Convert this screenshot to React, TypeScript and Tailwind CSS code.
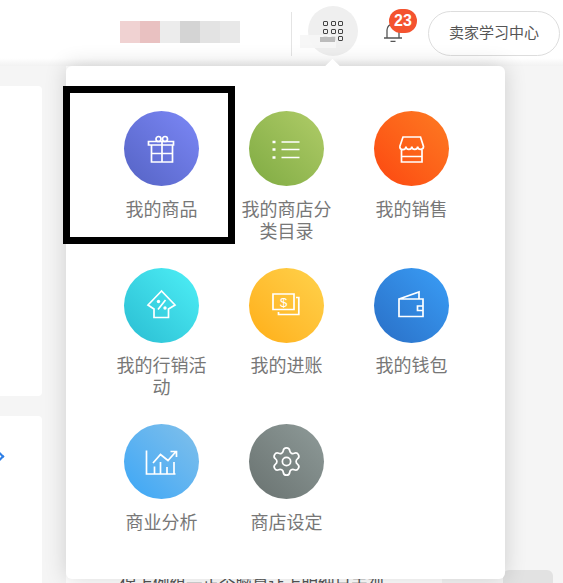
import { Settings } from "lucide-react";
import type { ReactNode } from "react";

function Line({ d }: { d: string }) {
  return <path d={d} fill="none" stroke="white" strokeWidth="1.7" />;
}

const GiftIcon = (
  <svg width="34" height="34" viewBox="0 0 34 34">
    <Line d="M3.5 9.5h25v3.5h-25zM6.5 13v17h21V13M17 9.5V30M6.5 21.5h21" />
    <circle cx="13.5" cy="7" r="2.5" fill="none" stroke="white" strokeWidth="1.7" />
    <circle cx="20" cy="7" r="2.5" fill="none" stroke="white" strokeWidth="1.7" />
  </svg>
);

const ListIcon = (
  <svg width="34" height="34" viewBox="0 0 34 34">
    <Line d="M11.5 10h18M11.5 17.5h18M11.5 25.5h18" />
    <path d="M2.5 8.8h3v2.4h-3zM2.5 16.3h3v2.4h-3zM2.5 24.3h3v2.4h-3z" fill="white" />
  </svg>
);

const StoreIcon = (
  <svg width="34" height="34" viewBox="0 0 34 34">
    <Line d="M4.800 14.500 8 5h17.500l3 9.500a2.900 2.900 0 0 1-5.850 0a2.900 2.900 0 0 1-5.850 0a2.900 2.900 0 0 1-5.850 0a2.900 2.900 0 0 1-6.150 0M6.500 18v12h20.500V18M6.500 24.500h20.500" />
  </svg>
);

const HouseIcon = (
  <svg width="34" height="34" viewBox="0 0 34 34">
    <Line d="M16.500 3 3 17l6 4v8.500h14.500V21l6.500-4zM20.500 12l-7.500 9.500" />
    <circle cx="13.500" cy="13.500" r="1.700" fill="white" />
    <circle cx="20" cy="20" r="1.700" fill="white" />
  </svg>
);

const MoneyIcon = (
  <svg width="34" height="34" viewBox="0 0 34 34">
    <Line d="M3 6h21v15.500H3zM26 9.500h2.800v17H8.500V24" />
    <text x="13.500" y="18.500" textAnchor="middle" fontSize="13" fill="white" fontFamily="Liberation Sans, sans-serif">
      $
    </text>
  </svg>
);

const WalletIcon = (
  <svg width="34" height="34" viewBox="0 0 34 34">
    <Line d="M4 11v17.500h24V11zM4 11l20-7v7M22.500 18H28v4.500h-5.500z" />
  </svg>
);

const ChartIcon = (
  <svg width="34" height="34" viewBox="0 0 34 34">
    <Line d="M1.500 5.500V29h29M9.500 29v-7.500M15.500 29V17M22 29v-7M29 29V17M8 18l7.500-8.500 7.500 6 8-9M25.500 6.500H31.500V12" />
  </svg>
);

const GearIcon = <Settings size={33} color="white" strokeWidth={1.25} />;

const entries: { label: string; circle: string; icon: ReactNode }[] = [
  { label: "我的商品", circle: "from-[#5563c4] to-[#7c88f7]", icon: GiftIcon },
  { label: "我的商店分类目录", circle: "from-[#7fab42] to-[#b0cc68]", icon: ListIcon },
  { label: "我的销售", circle: "from-[#fc4510] to-[#fd7a22]", icon: StoreIcon },
  { label: "我的行销活动", circle: "from-[#29bdd2] to-[#4ef0f7]", icon: HouseIcon },
  { label: "我的进账", circle: "from-[#ffae12] to-[#ffd24a]", icon: MoneyIcon },
  { label: "我的钱包", circle: "from-[#2a6fc6] to-[#3a9ef7]", icon: WalletIcon },
  { label: "商业分析", circle: "from-[#38a6f6] to-[#80c0ea]", icon: ChartIcon },
  { label: "商店设定", circle: "from-[#697270] to-[#8f9b99]", icon: GearIcon },
];

const mosaic = ["bg-[#f0d2d2]", "bg-[#e9c1c1]", "bg-[#ececec]", "bg-[#d4d4d4]", "bg-[#e3e3e3]", "bg-[#e8e8e8]"];

function Header() {
  return (
    <header className="flex h-[66px] items-start bg-linear-to-b from-white from-[88%] to-[#f2f2f2] pl-[120px]">
      <div className="mt-[21px] flex">
        {mosaic.map((color) => (
          <div key={color} className={`h-[22px] w-[20px] ${color}`} />
        ))}
      </div>
      <div className="mt-[12px] ml-[51px] h-[44px] w-px bg-[#e4e4e4]" />
      <div className="relative mt-[6px] ml-[16px] flex h-[50px] w-[50px] items-center justify-center rounded-full bg-[#efefef]">
        <div className="grid grid-cols-3 gap-[2.5px]">
          {Array.from({ length: 9 }, (_, i) => (
            <div key={i} className="h-[5px] w-[5px] rounded-[1px] border border-[#444]" />
          ))}
        </div>
        <div className="absolute top-[29px] left-[-8px] h-[13px] w-[36px] bg-[#f6f6f6]/90" />
        <div className="absolute top-[31px] left-[12px] h-[5px] w-[15px] bg-[#bcbcbc]" />
      </div>
      <div className="relative mt-[22px] ml-[26px] w-[18px]">
        <svg width="18" height="20" viewBox="0 0 18 20">
          <path
            d="M0 16h18M3 16V8a6 6 0 0 1 12 0v8M6.500 19.300h5"
            fill="none"
            stroke="#555"
            strokeWidth="1.300"
          />
        </svg>
        <div className="absolute top-[-13px] left-[5px] flex h-[24px] w-[28px] items-center justify-center rounded-full bg-[#f4532f] text-[16px] font-semibold text-white">
          23
        </div>
      </div>
      <button className="mt-[11px] ml-[26px] h-[45px] w-[132px] rounded-full border border-[#dddddd] bg-white text-[15px] text-[#555]">
        卖家学习中心
      </button>
    </header>
  );
}

function Menu() {
  return (
    <div className="absolute top-[66px] left-[66px] h-[513px] w-[439px] rounded-md bg-white shadow-[0_0_22px_rgba(0,0,0,0.16)]">
      <div className="absolute top-[-5px] left-[261px] h-[11px] w-[11px] rotate-45 bg-white" />
      <div className="relative ml-[33px] grid w-[375px] grid-cols-3 pt-[45px]">
        {entries.map((entry) => (
          <div key={entry.label} className="flex h-[156.5px] flex-col items-center">
            <div
              className={`flex h-[75px] w-[75px] items-center justify-center rounded-full bg-linear-to-tr ${entry.circle}`}
            >
              {entry.icon}
            </div>
            <div className="mt-[12.5px] w-[100px] text-center text-[18px] leading-[22px] text-[#777]">
              {entry.label}
            </div>
          </div>
        ))}
      </div>
    </div>
  );
}

export default function App() {
  return (
    <div className="relative h-[583px] w-[563px] overflow-hidden bg-[#f5f5f5] font-['Liberation_Sans','Noto_Sans_CJK_SC',sans-serif]">
      <Header />
      <main className="flex">
        <div className="flex w-[42px] flex-col gap-[20px] pt-[20px]">
          <div className="h-[310px] rounded-r-sm bg-white" />
          <div className="relative h-[300px] rounded-r-sm bg-white">
            <div className="absolute top-[37px] left-[-4px] h-[7px] w-[7px] rotate-45 border-t-2 border-r-2 border-[#2f7fe6]" />
          </div>
        </div>
        <div className="ml-[24px] h-[600px] w-[376px] bg-white pt-[506px] pl-[54px] text-[16.500px] leading-[24px] whitespace-nowrap text-[#555]">
          保上例组一正个脑算让上明细日未视
        </div>
        <div className="mt-[504px] ml-[61px] h-[40px] w-[50px] rounded-md bg-[#e2e2e2]" />
      </main>
      <Menu />
      <div className="absolute top-[86px] left-[63px] h-[158px] w-[172px] border-[7px] border-black" />
    </div>
  );
}
